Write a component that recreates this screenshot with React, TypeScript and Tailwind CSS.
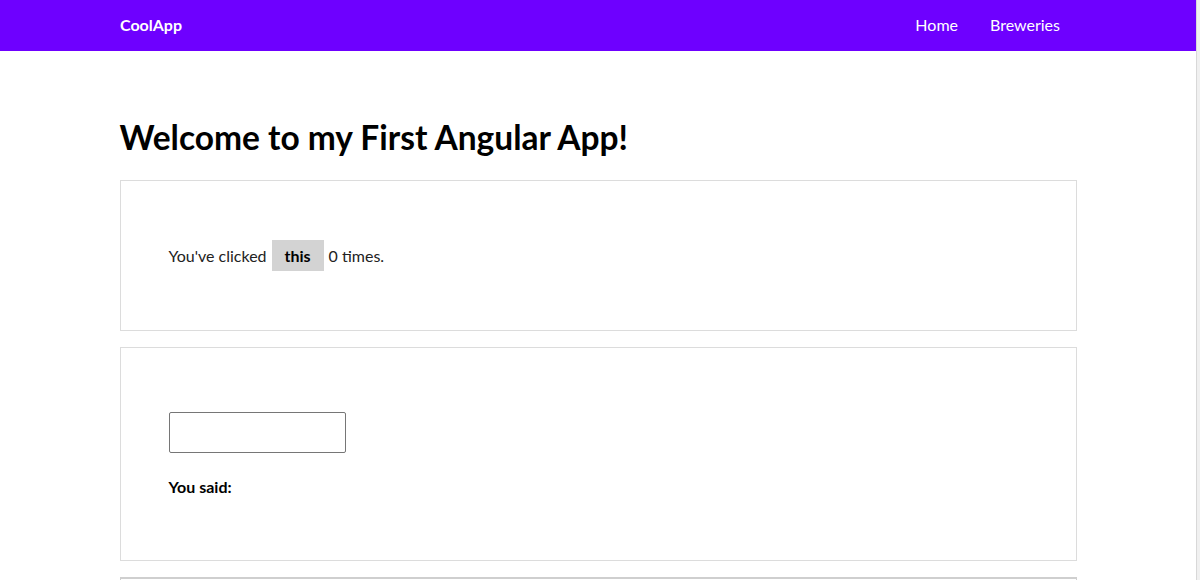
import { useState } from "react";

export default function App() {
  const [count, setCount] = useState(0);
  const [said, setSaid] = useState("");

  return (
    <div className="flex min-h-screen bg-white font-['Lato',sans-serif]">
      <div className="flex-1 overflow-hidden">
        <nav className="h-[51px] bg-[#6e00ff] text-white flex items-center px-[120px]">
          <span className="text-[16px] font-bold -mt-[2px]">CoolApp</span>
          <div className="ml-auto flex gap-[32px] text-[16px] mr-[16px] -mt-[2px]">
            <a href="#">Home</a>
            <a href="#">Breweries</a>
          </div>
        </nav>
        <main className="w-[957px] mx-auto pt-[65px]">
          <h1 className="text-[33.5px] font-bold text-black leading-[42px] mb-[22px]">
            Welcome to my First Angular App!
          </h1>
          <section className="border border-[#dcdcdc] px-12 py-[59px]">
            <div className="flex items-center text-[16px] text-[#222]">
              <span>You've clicked</span>
              <button
                onClick={() => setCount(count + 1)}
                className="mx-[5px] h-[31px] w-[52px] bg-[#d3d3d3] font-bold text-black"
              >
                this
              </button>
              <span>{count} times.</span>
            </div>
          </section>
          <section className="mt-4 border border-[#dcdcdc] px-12 pt-[64px] pb-[61px]">
            <input
              value={said}
              onChange={(e) => setSaid(e.target.value)}
              className="block w-[177px] h-[41px] border border-[#767676] rounded-[2px] px-2"
            />
            <p className="mt-[22px] leading-6 font-bold text-[16px] text-black">
              You said: {said}
            </p>
          </section>
          <section className="mt-4 h-[60px] border-t-2 border-x border-[#cfcfcf]" />
        </main>
      </div>
      <div className="w-[4px] bg-[#f0f0f0] border-l border-[#d8d8d8]" />
    </div>
  );
}
